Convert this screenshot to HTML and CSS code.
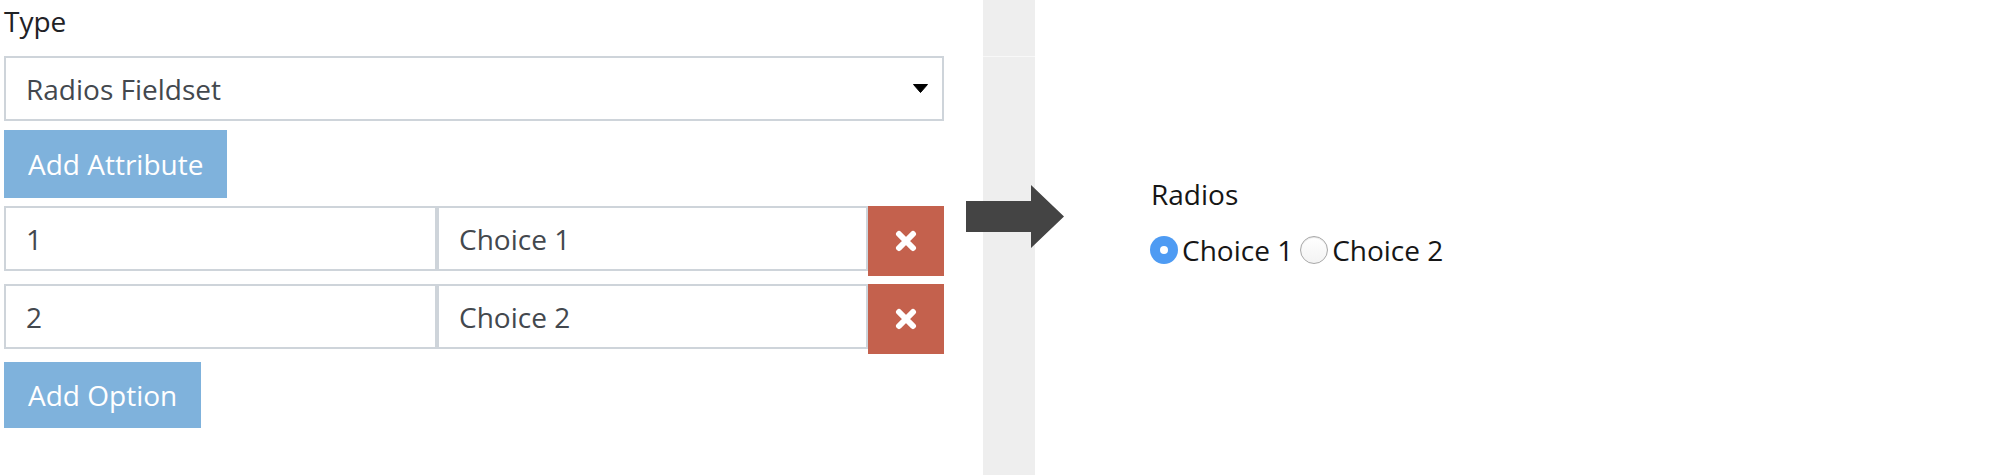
FILE: index.html
```html
<!DOCTYPE html>
<html lang="en">
<head>
<meta charset="utf-8">
<title>Radios Fieldset</title>
<link rel="stylesheet" href="styles.css">
</head>
<body>
<div class="page">
  <div class="editor">
    <div class="field-label">Type</div>
    <div class="select">
      <span class="select-text">Radios Fieldset</span>
      <svg class="caret" width="15" height="9" viewBox="0 0 15 9"><path d="M0.5 0.5 H14.5 L7.5 8.5 Z" fill="#000" stroke="#000" stroke-width="1" stroke-linejoin="round"/></svg>
    </div>
    <button class="btn btn-attr">Add Attribute</button>
    <div class="option-row">
      <div class="input input-value">1</div>
      <div class="input input-label">Choice 1</div>
      <button class="btn-delete"><svg width="22" height="22" viewBox="0 0 22 22"><path d="M4 4 L18 18 M18 4 L4 18" stroke="#fff" stroke-width="6" stroke-linecap="round"/></svg></button>
    </div>
    <div class="option-row">
      <div class="input input-value">2</div>
      <div class="input input-label">Choice 2</div>
      <button class="btn-delete"><svg width="22" height="22" viewBox="0 0 22 22"><path d="M4 4 L18 18 M18 4 L4 18" stroke="#fff" stroke-width="6" stroke-linecap="round"/></svg></button>
    </div>
    <button class="btn btn-option">Add Option</button>
  </div>
  <div class="divider">
    <div class="divider-top"></div>
    <div class="divider-rest"></div>
  </div>
  <div class="preview">
    <div class="preview-label">Radios</div>
    <div class="radio-group">
      <span class="radio radio-checked"></span><span class="radio-text">Choice 1</span>
      <span class="radio"></span><span class="radio-text">Choice 2</span>
    </div>
  </div>
  <svg class="arrow" width="98" height="63" viewBox="0 0 98 63"><polygon points="0,16 65,16 65,0 98,31.5 65,63 65,47 0,47" fill="#444444"/></svg>
</div>
</body>
</html>
```

FILE: styles.css
```css
* { box-sizing: border-box; }

html, body {
  margin: 0;
  padding: 0;
  background: #ffffff;
}

body {
  font-family: "Open Sans", "Liberation Sans", sans-serif;
  font-size: 28px;
  line-height: 42px;
  color: #1f2226;
}

.page {
  position: relative;
  display: flex;
  height: 475px;
  padding-left: 4px;
}

.editor {
  width: 940px;
  display: flex;
  flex-direction: column;
  align-items: flex-start;
}

.field-label {
  height: 42px;
  margin-bottom: 14px;
}

.select {
  width: 940px;
  height: 65px;
  border: 2px solid #ced4da;
  display: flex;
  align-items: center;
  justify-content: space-between;
  padding: 0 14px 0 20px;
  color: #43484e;
}

.caret { display: block; }

.btn {
  font-family: inherit;
  font-size: 28px;
  line-height: 42px;
  color: #ffffff;
  background: #7fb2dc;
  border: none;
  padding: 0 24px;
  margin: 0;
  display: flex;
  align-items: center;
}

.btn-attr {
  height: 68px;
  margin-top: 9px;
}

.btn-option {
  height: 66px;
  margin-top: 8px;
}

.option-row {
  display: flex;
  align-items: flex-start;
  margin-top: 8px;
  width: 940px;
}

.input {
  height: 65px;
  border: 2px solid #ced4da;
  display: flex;
  align-items: center;
  padding: 0 20px;
  color: #43484e;
}

.input-value { width: 433px; }
.input-label { width: 431px; }

.btn-delete {
  width: 76px;
  height: 70px;
  border: none;
  margin: 0;
  padding: 0;
  background: #c4614d;
  display: flex;
  align-items: center;
  justify-content: center;
}

.btn-delete svg { display: block; }

.divider {
  width: 52px;
  margin-left: 39px;
  display: flex;
  flex-direction: column;
  background: #eeeeee;
}

.divider-top { height: 56px; }

.divider-rest {
  flex: 1;
  border-top: 1px solid #f8f8f8;
}

.preview {
  padding-left: 115px;
  padding-top: 173px;
  color: #161616;
}

.preview-label {
  height: 42px;
  margin-bottom: 14px;
  padding-left: 1px;
}

.radio-group {
  display: flex;
  align-items: center;
  height: 42px;
}

.radio {
  width: 28px;
  height: 28px;
  border-radius: 50%;
  border: 1px solid #a8a8a8;
  background: linear-gradient(#ffffff, #f3f3f3);
  box-shadow: inset 0 1px 1px rgba(0,0,0,0.1);
  margin-right: 4px;
  position: relative;
  flex: none;
}

.radio-checked {
  border: none;
  background: #4e9bf3;
  box-shadow: none;
}

.radio-checked::after {
  content: "";
  position: absolute;
  left: 10px;
  top: 10px;
  width: 8px;
  height: 8px;
  border-radius: 50%;
  background: #ffffff;
}

.radio-text {
  margin-right: 7px;
}

.arrow {
  position: absolute;
  left: 966px;
  top: 185px;
}
```
